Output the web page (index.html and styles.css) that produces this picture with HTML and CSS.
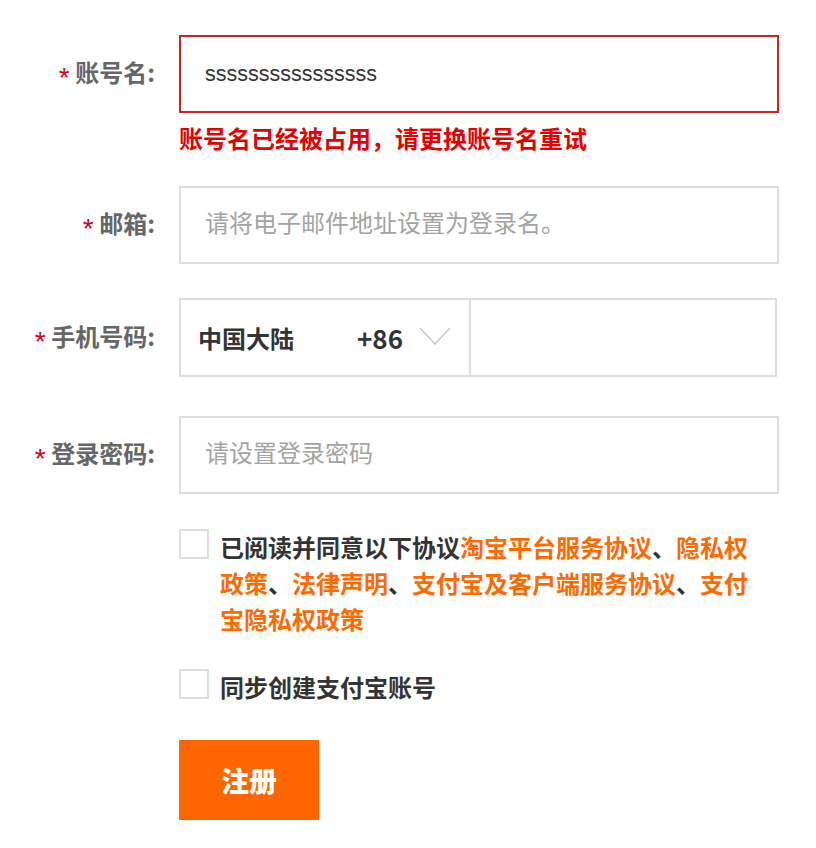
FILE: index.html
```html
<!DOCTYPE html>
<html lang="zh-CN">
<head>
<meta charset="utf-8">
<title>注册</title>
<link rel="stylesheet" href="styles.css">
</head>
<body>
<form class="reg">
  <div class="row row-user">
    <label class="lbl"><span class="star">*</span> 账号名:</label>
    <input class="inp inp-err" type="text" value="ssssssssssssssss">
  </div>
  <div class="row row-msg">
    <span></span>
    <div class="err">账号名已经被占用，请更换账号名重试</div>
  </div>
  <div class="row row-email">
    <label class="lbl"><span class="star">*</span> 邮箱:</label>
    <input class="inp" type="text" placeholder="请将电子邮件地址设置为登录名。">
  </div>
  <div class="row row-phone">
    <label class="lbl"><span class="star">*</span> 手机号码:</label>
    <div class="phone">
      <div class="area">
        <span class="country">中国大陆</span>
        <span class="code">+86</span>
        <svg class="chev" width="32" height="18" viewBox="0 0 32 18"><polyline points="1,1 16,17 31,1" fill="none" stroke="#c8c8c8" stroke-width="1.5"/></svg>
      </div>
      <input class="tel" type="text">
    </div>
  </div>
  <div class="row row-pwd">
    <label class="lbl"><span class="star">*</span> 登录密码:</label>
    <input class="inp" type="password" placeholder="请设置登录密码">
  </div>
  <div class="row row-agree">
    <span></span>
    <div class="check">
      <span class="box"></span>
      <p class="check-text">已阅读并同意以下协议<a class="link">淘宝平台服务协议</a>、<a class="link">隐私权</a><a class="link">政策</a>、<a class="link">法律声明</a>、<a class="link">支付宝及客户端服务协议</a>、<a class="link">支付</a><a class="link">宝隐私权政策</a></p>
    </div>
  </div>
  <div class="row row-sync">
    <span></span>
    <div class="check">
      <span class="box"></span>
      <p class="check-text">同步创建支付宝账号</p>
    </div>
  </div>
  <div class="row row-btn">
    <span></span>
    <div><button class="btn" type="button">注册</button></div>
  </div>
</form>
</body>
</html>
```
FILE: styles.css
```css
* { box-sizing: border-box; }
html, body { margin: 0; padding: 0; background: #fff; }
body { font-family: "Noto Sans CJK SC", sans-serif; color: #333; }

.reg { padding-top: 35px; }

.row {
  display: grid;
  grid-template-columns: 155px 600px;
  column-gap: 24px;
  align-items: center;
}

.lbl {
  text-align: right;
  font-size: 24px;
  font-weight: 700;
  color: #666;
  white-space: nowrap;
}
.star {
  color: #d9001b;
  font-family: "Liberation Sans", sans-serif;
  font-size: 28px;
  font-weight: 400;
  vertical-align: -5px;
}

.inp {
  display: block;
  width: 600px;
  height: 78px;
  border: 2px solid #ddd;
  padding: 0 24px;
  font-family: "Liberation Sans", "Noto Sans CJK SC", sans-serif;
  font-size: 21.5px;
  color: #333;
  outline: none;
  background: #fff;
}
.inp::placeholder {
  color: #a3a3a3;
  font-family: "Noto Sans CJK SC", sans-serif;
  font-size: 24px;
}
.inp-err { border-color: #c9252b; }

.row-msg { margin-top: 12px; }
.err {
  color: #e60000;
  font-size: 24px;
  font-weight: 700;
  line-height: 26px;
  white-space: nowrap;
}

.row-email { margin-top: 35px; }
.row-phone { margin-top: 34px; }
.row-pwd { margin-top: 39px; }

.phone {
  display: flex;
  width: 598px;
  height: 79px;
  border: 2px solid #ddd;
}
.area {
  display: flex;
  align-items: center;
  width: 290px;
  padding-left: 17px;
  border-right: 2px solid #ddd;
}
.country {
  width: 159px;
  font-size: 24px;
  font-weight: 700;
  color: #333;
}
.code {
  font-size: 26px;
  font-weight: 700;
  color: #333;
}
.chev { margin-left: 16px; margin-top: -3px; }
.tel {
  flex: 1;
  border: 0;
  outline: none;
  min-width: 0;
}

.row-agree { margin-top: 35px; align-items: start; }
.row-sync { margin-top: 32px; align-items: start; }
.row-btn { margin-top: 35px; }

.check {
  display: flex;
  align-items: flex-start;
  gap: 11px;
}
.box {
  flex: none;
  width: 30px;
  height: 30px;
  border: 2px solid #ddd;
  background: #fff;
}
.check-text {
  margin: 0;
  max-width: 540px;
  font-size: 24px;
  font-weight: 700;
  line-height: 36px;
  color: #333;
}
.link { color: #ff6a00; text-decoration: none; }

.btn {
  display: block;
  width: 140px;
  height: 80px;
  border: 0;
  background: #ff6600;
  color: #fff;
  font-family: "Noto Sans CJK SC", sans-serif;
  font-size: 28px;
  font-weight: 900;
  padding: 0;
}
```
